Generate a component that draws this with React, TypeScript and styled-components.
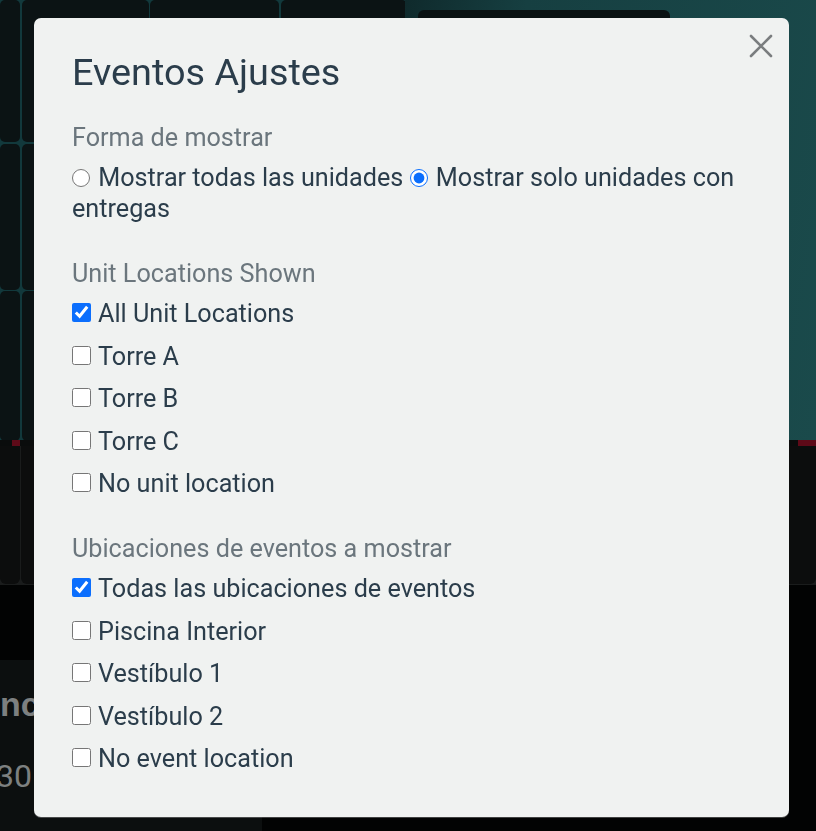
import React from "react";
import styled, { createGlobalStyle } from "styled-components";

const Global = createGlobalStyle`
  html, body { margin: 0; padding: 0; background: #020303; }
  body { font-family: Roboto, "Noto Sans", Arial, sans-serif; }
  * { box-sizing: border-box; }
`;

const Page = styled.div`
  width: 816px;
  height: 831px;
  overflow: hidden;
  display: flex;
  flex-direction: column;
  background: #020303;
`;

const TopArea = styled.div`
  height: 440px;
  display: flex;
`;

const TileGrid = styled.div`
  width: 405px;
  display: grid;
  grid-template-columns: 20px 127px 129px 126px;
  grid-template-rows: 142px 146px 150px;
  gap: 1.5px;
  background: #12393c;
`;

const Tile = styled.div`
  background: #0b1314;
  border-radius: 5px;
`;

const TealPanel = styled.div`
  flex: 1;
  background: linear-gradient(100deg, #0f2a2c 0%, #163f41 25%, #1a4a4b 100%);
  padding: 10px 146px 0 13px;
`;

const DarkBar = styled.div`
  height: 40px;
  background: #0a1213;
  border-radius: 6px;
`;

const RedStrip = styled.div`
  height: 6px;
  background: #0a0c0c;
  display: flex;
  padding-left: 12px;
`;

const RedMark = styled.div<{ $w: number }>`
  width: ${(p) => p.$w}px;
  background: #5e0a18;
`;

const Spacer = styled.div<{ $w: number }>`
  width: ${(p) => p.$w}px;
`;

const BottomTiles = styled.div`
  height: 139px;
  display: grid;
  grid-template-columns: 20px 1fr;
  gap: 1px;
  background: #1a1c1c;
  padding-bottom: 1px;
`;

const DarkTile = styled.div`
  background: #0c0d0d;
  border-radius: 0 0 6px 6px;
`;

const Gap = styled.div`
  height: 75px;
  background: #020303;
`;

const LowerPanel = styled.div`
  width: 262px;
  flex: 1;
  background: #0c0f0f;
  color: #7d8080;
  padding-top: 22px;
  overflow: hidden;
`;

const PanelTitle = styled.div`
  font-family: "Liberation Sans", Arial, sans-serif;
  font-weight: 700;
  font-size: 34px;
  line-height: 44px;
  white-space: nowrap;
`;

const PanelSub = styled.div`
  font-size: 32px;
  line-height: 40px;
  margin-top: 30px;
  margin-left: -4px;
  white-space: nowrap;
`;

const Overlay = styled.div`
  position: fixed;
  inset: 0;
  display: flex;
  align-items: flex-start;
  justify-content: flex-start;
  padding: 18px 0 0 34px;
`;

const Modal = styled.div`
  position: relative;
  width: 755px;
  height: 799px;
  background: #f0f2f1;
  border-radius: 7px;
  padding: 31px 38px 0 38px;
  color: #2b3d4b;
  font-family: Roboto, "Noto Sans", Arial, sans-serif;
  box-shadow: 0 1px 0 rgba(255, 255, 255, 0.25);
`;

const Close = styled.button`
  position: absolute;
  top: 12px;
  right: 12px;
  width: 32px;
  height: 32px;
  border: 0;
  padding: 0;
  background: transparent;
  display: flex;
  align-items: center;
  justify-content: center;
  cursor: pointer;
`;

const Title = styled.h2`
  margin: 0 0 26.5px 0;
  font-size: 37.8px;
  font-weight: 400;
  line-height: 46px;
`;

const Section = styled.div`
  display: flex;
  flex-direction: column;
  margin-bottom: 33.5px;
`;

const SectionLabel = styled.div`
  font-size: 25.2px;
  line-height: 31px;
  color: #6b767d;
  margin-bottom: 9.5px;
`;

const RadioLine = styled.div`
  font-size: 25.2px;
  line-height: 31px;
`;

const RadioOption = styled.label`
  display: inline;
`;

const Radio = styled.input`
  width: 18px;
  height: 18px;
  margin: 0 2px 0 0;
  vertical-align: -1px;
  accent-color: #0b6efd;
`;

const List = styled.div`
  display: flex;
  flex-direction: column;
  gap: 11.5px;
`;

const Item = styled.label`
  display: flex;
  align-items: center;
  font-size: 25.2px;
  line-height: 31px;
  height: 31px;
`;

const Check = styled.input`
  width: 19px;
  height: 19px;
  margin: 0 7px 0 0;
  position: relative;
  top: -1px;
  accent-color: #0b6efd;
`;

const unitItems = ["All Unit Locations", "Torre A", "Torre B", "Torre C", "No unit location"];
const eventItems = [
  "Todas las ubicaciones de eventos",
  "Piscina Interior",
  "Vestíbulo 1",
  "Vestíbulo 2",
  "No event location",
];

export default function App() {
  return (
    <>
      <Global />
      <Page>
        <TopArea>
          <TileGrid>
            {Array.from({ length: 12 }).map((_, i) => (
              <Tile key={i} />
            ))}
          </TileGrid>
          <TealPanel>
            <DarkBar />
          </TealPanel>
        </TopArea>
        <RedStrip>
          <RedMark $w={8} />
          <Spacer $w={778} />
          <RedMark $w={18} />
        </RedStrip>
        <BottomTiles>
          <DarkTile />
          <DarkTile />
        </BottomTiles>
        <Gap />
        <LowerPanel>
          <PanelTitle>ncia</PanelTitle>
          <PanelSub>30 l</PanelSub>
        </LowerPanel>
      </Page>
      <Overlay>
        <Modal role="dialog" aria-label="Eventos Ajustes">
          <Close aria-label="Cerrar">
            <svg width="24" height="24" viewBox="0 0 24 24">
              <path d="M2 2 L22 22 M22 2 L2 22" stroke="#7a7d7f" strokeWidth="2.6" strokeLinecap="round" />
            </svg>
          </Close>
          <Title>Eventos Ajustes</Title>
          <Section>
            <SectionLabel>Forma de mostrar</SectionLabel>
            <RadioLine>
              <RadioOption>
                <Radio type="radio" name="forma" /> Mostrar todas las unidades
              </RadioOption>{" "}
              <RadioOption>
                <Radio type="radio" name="forma" defaultChecked /> Mostrar solo unidades con entregas
              </RadioOption>
            </RadioLine>
          </Section>
          <Section>
            <SectionLabel>Unit Locations Shown</SectionLabel>
            <List>
              {unitItems.map((t, i) => (
                <Item key={t}>
                  <Check type="checkbox" defaultChecked={i === 0} />
                  {t}
                </Item>
              ))}
            </List>
          </Section>
          <Section>
            <SectionLabel>Ubicaciones de eventos a mostrar</SectionLabel>
            <List>
              {eventItems.map((t, i) => (
                <Item key={t}>
                  <Check type="checkbox" defaultChecked={i === 0} />
                  {t}
                </Item>
              ))}
            </List>
          </Section>
        </Modal>
      </Overlay>
    </>
  );
}
